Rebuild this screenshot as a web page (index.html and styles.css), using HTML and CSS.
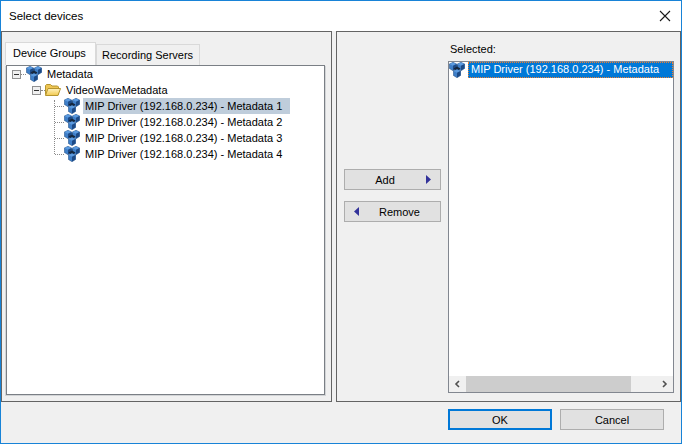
FILE: index.html
```html
<!DOCTYPE html>
<html lang="en">
<head>
<meta charset="utf-8">
<title>Select devices</title>
<link rel="stylesheet" href="styles.css">
</head>
<body>
<svg class="defs" width="0" height="0" aria-hidden="true">
  <defs>
    <symbol id="cube" viewBox="0 0 8 9">
      <path d="M4 .3 7.700 2V6.400L4 8.700 .3 6.400V2Z" fill="#3f7fc8" stroke="#2b4f7a" stroke-width=".5"/>
      <path d="M.5 2 4 .5 7.500 2 4 3.700Z" fill="#5c9be0"/>
      <path d="M4 3.700 7.500 2V6.300L4 8.500Z" fill="#1d4a86"/>
    </symbol>
    <symbol id="device" viewBox="0 0 16 16">
      <path d="M3 3H13L8 12Z" fill="#16283f"/>
      <use href="#cube" x="0" y="0" width="8" height="9"/>
      <use href="#cube" x="8" y="0" width="8" height="9"/>
      <path d="M4.500 6.500 8 4.500 11.500 6.500 8 9.500Z" fill="#16283f"/>
      <use href="#cube" x="4" y="7" width="8" height="9"/>
    </symbol>
  </defs>
</svg>
<div class="window">
  <header class="titlebar">
    <span class="title">Select devices</span>
    <svg class="close" width="12" height="12" viewBox="0 0 12 12"><path d="M1 1 11 11M11 1 1 11" stroke="#1a1a1a" stroke-width="1.100" fill="none"/></svg>
  </header>
  <main class="panels">
    <section class="panel left">
      <div class="tabs">
        <div class="tab active">Device Groups</div>
        <div class="tab">Recording Servers</div>
      </div>
      <div class="tree">
        <div class="row root">
          <span class="exp"></span><span class="dash short"></span>
          <svg class="ico"><use href="#device"/></svg>
          <span class="label">Metadata</span>
        </div>
        <div class="row group">
          <span class="exp"></span><span class="dash short"></span>
          <svg class="ico" viewBox="0 0 16 16"><defs><linearGradient id="fold" x1="0" y1="0" x2="0" y2="1"><stop offset="0" stop-color="#fff3c0"/><stop offset="1" stop-color="#f2c94e"/></linearGradient></defs><path d="M.5 12.500V3.500L1.500 2.500H5.500L7 4H12.500L13.500 5V12.500Z" fill="#eec553" stroke="#b5952f"/><path d="M.5 13.500 3 6.500H15.500L13 13.500Z" fill="url(#fold)" stroke="#b5952f"/></svg>
          <span class="label">VideoWaveMetadata</span>
        </div>
        <div class="leaves">
          <div class="row leaf"><span class="dash"></span><svg class="ico"><use href="#device"/></svg><span class="label current">MIP Driver (192.168.0.234) - Metadata 1</span></div>
          <div class="row leaf"><span class="dash"></span><svg class="ico"><use href="#device"/></svg><span class="label">MIP Driver (192.168.0.234) - Metadata 2</span></div>
          <div class="row leaf"><span class="dash"></span><svg class="ico"><use href="#device"/></svg><span class="label">MIP Driver (192.168.0.234) - Metadata 3</span></div>
          <div class="row leaf"><span class="dash"></span><svg class="ico"><use href="#device"/></svg><span class="label">MIP Driver (192.168.0.234) - Metadata 4</span></div>
        </div>
      </div>
    </section>
    <section class="panel right">
      <div class="actions">
        <button class="btn move add"><span class="mtext">Add</span><svg width="5" height="9" viewBox="0 0 5 9"><path d="M0 0 5 4.500 0 9Z" fill="#32329a"/></svg></button>
        <button class="btn move remove"><svg width="5" height="9" viewBox="0 0 5 9"><path d="M5 0 0 4.500 5 9Z" fill="#32329a"/></svg><span class="mtext">Remove</span></button>
      </div>
      <div class="selected">
        <div class="sel-label">Selected:</div>
        <div class="listbox">
          <div class="items">
            <div class="item"><svg class="ico"><use href="#device"/></svg><span class="sel-text">MIP Driver (192.168.0.234) - Metadata</span></div>
          </div>
          <div class="hscroll">
            <svg class="arrow" width="8" height="8" viewBox="0 0 8 8"><path d="M5.500 1 2.500 4 5.500 7" stroke="#505050" stroke-width="1.600" fill="none"/></svg>
            <div class="track"><div class="thumb"></div></div>
            <svg class="arrow" width="8" height="8" viewBox="0 0 8 8"><path d="M2.500 1 5.500 4 2.500 7" stroke="#505050" stroke-width="1.600" fill="none"/></svg>
          </div>
        </div>
      </div>
    </section>
  </main>
  <footer class="footer">
    <button class="btn dlg primary">OK</button>
    <button class="btn dlg">Cancel</button>
  </footer>
</div>
</body>
</html>
```
FILE: styles.css
```css
html, body { margin: 0; padding: 0; }
body {
  width: 682px;
  height: 444px;
  overflow: hidden;
  font-family: "Liberation Sans", Arial, sans-serif;
  font-size: 11px;
  color: #000;
  background: #f0f0f0;
}
.defs { position: absolute; }
.window {
  box-sizing: border-box;
  width: 682px;
  height: 444px;
  display: flex;
  flex-direction: column;
  border: 1px solid #1883d7;
  background: #f0f0f0;
}
.titlebar {
  height: 30px;
  flex: none;
  background: #fff;
  display: flex;
  align-items: center;
  justify-content: space-between;
  padding: 0 10px 0 8px;
}
.title { font-size: 11.500px; }
.panels {
  height: 371px;
  flex: none;
  display: flex;
  gap: 4px;
}
.panel {
  box-sizing: border-box;
  height: 371px;
  border: 1px solid #646464;
}
.left { width: 331px; padding: 10px 6px 6px 3px; display: flex; flex-direction: column; }
.right { width: 345px; display: flex; padding-left: 7px; padding-right: 6px; }
.tabs { height: 23px; display: flex; align-items: flex-end; flex: none; }
.tab {
  box-sizing: border-box;
  height: 21px;
  padding: 4px 0 0 5px;
  width: 104px;
  border: 1px solid #d9d9d9;
  border-bottom: 0;
  background: #f0f0f0;
  white-space: nowrap;
}
.tab.active {
  width: 91px;
  height: 23px;
  padding: 4px 0 0 7px;
  background: #fbfbfb;
}
.tree {
  box-sizing: border-box;
  flex: 1;
  margin-left: 1px;
  border: 1px solid #7a7f85;
  box-shadow: -1px 1px 0 #d2d4d6, 1px 1px 0 #d2d4d6;
  background: #fff;
}
.row { height: 16px; display: flex; align-items: center; }
.root { padding-left: 5px; }
.group { padding-left: 25px; }
.exp {
  box-sizing: border-box;
  width: 9px;
  height: 9px;
  flex: none;
  border: 1px solid #919191;
  background: linear-gradient(#303030 0 0) center / 5px 1px no-repeat, #f0f0f0;
}
.ico { width: 16px; height: 16px; flex: none; display: block; }
.label { margin-left: 3px; padding: 0 2px; line-height: 16px; white-space: nowrap; }
.leaves {
  margin-left: 48px;
  position: relative;
}
.leaves::before {
  content: "";
  position: absolute;
  left: -1px;
  top: 2px;
  height: 54px;
  border-left: 1px dotted #8a8a8a;
}
.dash { width: 9px; flex: none; border-top: 1px dotted #8a8a8a; }
.dash.short { width: 5px; }
.group .dash.short { width: 4px; }
.current { background: #bfcddb; padding-right: 8px; }
.actions {
  width: 97px;
  flex: none;
  display: flex;
  flex-direction: column;
  gap: 11px;
  padding-top: 137px;
  margin-right: 7px;
}
.btn {
  font: inherit;
  color: #000;
  background: #e1e1e1;
  border: 1px solid #adadad;
  margin: 0;
  padding: 0;
}
.move {
  box-sizing: border-box;
  width: 97px;
  height: 21px;
  display: flex;
  align-items: center;
  justify-content: space-between;
  padding: 0 9px;
}
.mtext { flex: 1; text-align: center; }
.add .mtext { padding-right: 10px; }
.remove .mtext { padding-left: 9px; }
.selected { flex: 1; display: flex; flex-direction: column; padding-top: 10px; }
.sel-label { height: 19px; line-height: 15px; margin-left: 2px; }
.listbox {
  box-sizing: border-box;
  width: 226px;
  height: 332px;
  border: 1px solid #828790;
  background: #fff;
  display: flex;
  flex-direction: column;
}
.items { flex: 1; }
.item { display: flex; align-items: center; height: 16px; }
.sel-text {
  box-sizing: border-box;
  width: 205px;
  height: 16px;
  line-height: 15px;
  margin-left: 3px;
  padding-left: 3px;
  color: #fff;
  background: #0078d7;
  outline: 1px dotted #f08030;
  outline-offset: -1px;
  white-space: nowrap;
}
.hscroll {
  height: 16px;
  flex: none;
  display: flex;
  align-items: center;
  background: #f0f0f0;
}
.arrow { width: 17px; flex: none; }
.track { flex: 1; height: 16px; }
.thumb { width: 165px; height: 16px; background: #cdcdcd; }
.footer {
  flex: 1;
  display: flex;
  justify-content: flex-end;
  gap: 8px;
  padding: 7px 17px 0 0;
}
.dlg {
  box-sizing: border-box;
  width: 104px;
  height: 21px;
}
.primary { border: 2px solid #0078d7; }
```
